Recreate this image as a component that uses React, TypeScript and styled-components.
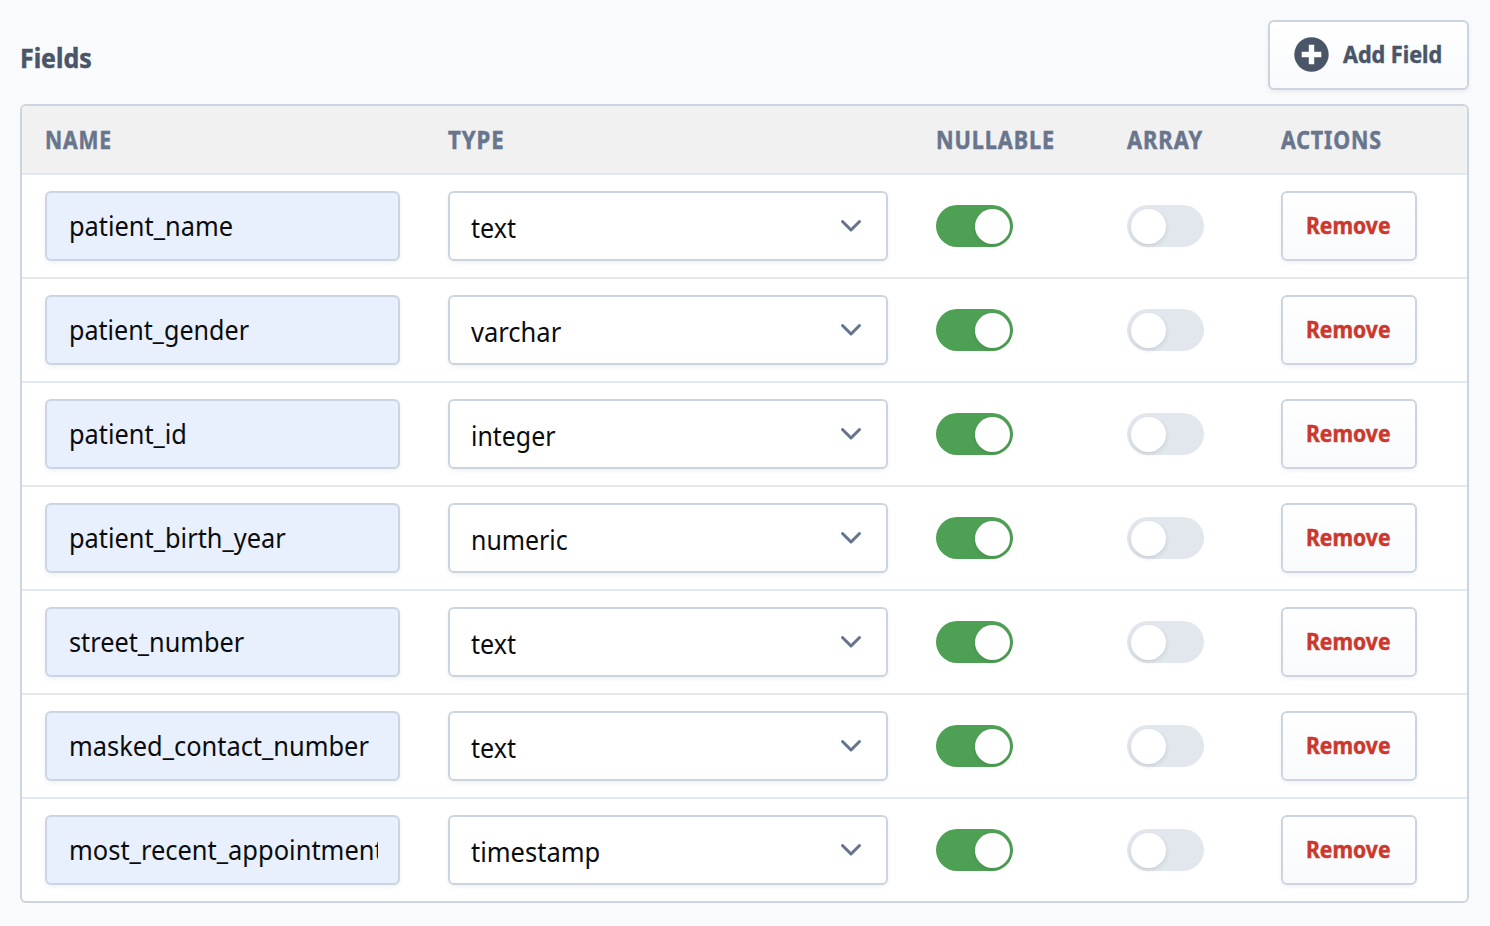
import React from "react";
import styled, { createGlobalStyle } from "styled-components";

const GlobalStyle = createGlobalStyle`
  * { box-sizing: border-box; }
  body {
    margin: 0;
    background: #f9fafc;
    font-family: "Noto Sans", "Open Sans", sans-serif;
  }
`;

const Page = styled.main`
  width: 1490px;
  height: 926px;
  padding: 20px 21px 0 20px;
  overflow: hidden;
`;

const TopBar = styled.header`
  display: flex;
  justify-content: space-between;
  height: 84px;
`;

/* Narrow lettering: glyphs are squeezed horizontally from their left edge. */
const Lettering = styled.span<{ $squeeze: number; $tracking?: number; $heavy?: boolean }>`
  display: inline-block;
  white-space: nowrap;
  transform-origin: 0 50%;
  transform: scaleX(${(p) => p.$squeeze});
  letter-spacing: ${(p) => p.$tracking ?? 0}px;
  -webkit-text-stroke: ${(p) => (p.$heavy ? "0.5px currentColor" : "0")};
`;

const Title = styled.h1`
  margin: 20px 0 0;
  font-size: 26.5px;
  line-height: 36px;
  font-weight: 700;
  color: #4a5568;
`;

const Button = styled.button<{ $width: number; $danger?: boolean }>`
  display: flex;
  align-items: center;
  width: ${(p) => p.$width}px;
  height: 70px;
  padding: 0 0 2px 23px;
  border: 2px solid #cbd5e1;
  border-radius: 6px;
  background: linear-gradient(#ffffff, #f8fafc);
  box-shadow: 0 2px 4px rgba(15, 23, 42, 0.06);
  font: 700 24px/34px "Noto Sans", "Open Sans", sans-serif;
  color: ${(p) => (p.$danger ? "#cb382d" : "#4a5568")};
`;

const PlusIcon = styled.svg`
  flex: none;
  width: 36px;
  height: 36px;
  margin-right: 14px;
`;

const Table = styled.section`
  border: 2px solid #cbd5e1;
  border-radius: 6px;
  background: #ffffff;
  overflow: hidden;
`;

const Row = styled.div`
  display: grid;
  grid-template-columns: 403px 488px 191px 154px 1fr;
  align-items: center;
  height: 104px;
  padding-left: 23px;
  border-bottom: 2px solid #e2e8f0;
  &:last-child {
    height: 102px;
    border-bottom: 0;
  }
`;

const HeadRow = styled(Row)`
  height: 69px;
  background: #f1f1f1;
`;

const HeadCell = styled.div`
  font-size: 24.5px;
  line-height: 34px;
  font-weight: 700;
  color: #68758d;
`;

const Field = styled.div<{ $filled?: boolean }>`
  display: flex;
  align-items: center;
  width: ${(p) => (p.$filled ? 355 : 440)}px;
  height: 70px;
  padding: ${(p) => (p.$filled ? "0 20px 0 21.5px" : "3px 23px 0 21px")};
  border: 2px solid #cbd5e1;
  border-radius: 6px;
  background: ${(p) => (p.$filled ? "#e8effd" : "#ffffff")};
  box-shadow: 0 2px 4px rgba(15, 23, 42, 0.06);
  font-size: 27px;
  line-height: 38px;
  color: #0b0c0e;
`;

const FieldText = styled.div`
  flex: 1;
  min-width: 0;
  overflow: hidden;
`;

const Chevron = styled.svg`
  flex: none;
  width: 24px;
  height: 16px;
  margin-bottom: 3px;
`;

const Switch = styled.div<{ $on?: boolean }>`
  display: flex;
  justify-content: ${(p) => (p.$on ? "flex-end" : "flex-start")};
  width: 77px;
  height: 42px;
  padding: 4px 3px 3px 4px;
  border-radius: 21px;
  background: ${(p) => (p.$on ? "#4ea154" : "#e2e7ee")};
`;

const Knob = styled.div`
  width: 35px;
  height: 35px;
  border-radius: 50%;
  background: #ffffff;
  box-shadow: 0 2px 4px rgba(15, 23, 42, 0.12);
`;

const headings = [
  { text: "NAME", squeeze: 0.862 },
  { text: "TYPE", squeeze: 0.905 },
  { text: "NULLABLE", squeeze: 0.885 },
  { text: "ARRAY", squeeze: 0.895 },
  { text: "ACTIONS", squeeze: 0.873 },
];

const fields = [
  { name: "patient_name", nameFit: 0.94, type: "text", typeFit: 0.93 },
  { name: "patient_gender", nameFit: 0.93, type: "varchar", typeFit: 0.945 },
  { name: "patient_id", nameFit: 0.938, type: "integer", typeFit: 0.922 },
  { name: "patient_birth_year", nameFit: 0.94, type: "numeric", typeFit: 0.922 },
  { name: "street_number", nameFit: 0.937, type: "text", typeFit: 0.93 },
  { name: "masked_contact_number", nameFit: 0.941, type: "text", typeFit: 0.93 },
  { name: "most_recent_appointment", nameFit: 0.943, type: "timestamp", typeFit: 0.944 },
];

export default function App() {
  return (
    <>
      <GlobalStyle />
      <Page>
        <TopBar>
          <Title><Lettering $heavy $squeeze={0.94}>Fields</Lettering></Title>
          <Button $width={201}>
            <PlusIcon viewBox="0 0 36 36">
              <circle cx="18.5" cy="18.5" r="17.2" fill="#4a5568" />
              <path d="M18.5 8.7V28.3M8.7 18.5H28.3" stroke="#fff" strokeWidth="5.4" />
            </PlusIcon>
            <Lettering $heavy $squeeze={0.9}>Add Field</Lettering>
          </Button>
        </TopBar>
        <Table>
          <HeadRow>
            {headings.map((h) => (
              <HeadCell key={h.text}>
                <Lettering $heavy $squeeze={h.squeeze} $tracking={1}>{h.text}</Lettering>
              </HeadCell>
            ))}
          </HeadRow>
          {fields.map((f) => (
            <Row key={f.name}>
              <Field $filled>
                <FieldText><Lettering $squeeze={f.nameFit}>{f.name}</Lettering></FieldText>
              </Field>
              <Field>
                <FieldText><Lettering $squeeze={f.typeFit}>{f.type}</Lettering></FieldText>
                <Chevron viewBox="0 0 24 16" fill="none">
                  <path d="M3.5 3.5L12 12L20.5 3.5" stroke="#64748b" strokeWidth="3" strokeLinecap="round" strokeLinejoin="round" />
                </Chevron>
              </Field>
              <Switch $on><Knob /></Switch>
              <Switch><Knob /></Switch>
              <Button $width={136} $danger>
                <Lettering $heavy $squeeze={0.88}>Remove</Lettering>
              </Button>
            </Row>
          ))}
        </Table>
      </Page>
    </>
  );
}
